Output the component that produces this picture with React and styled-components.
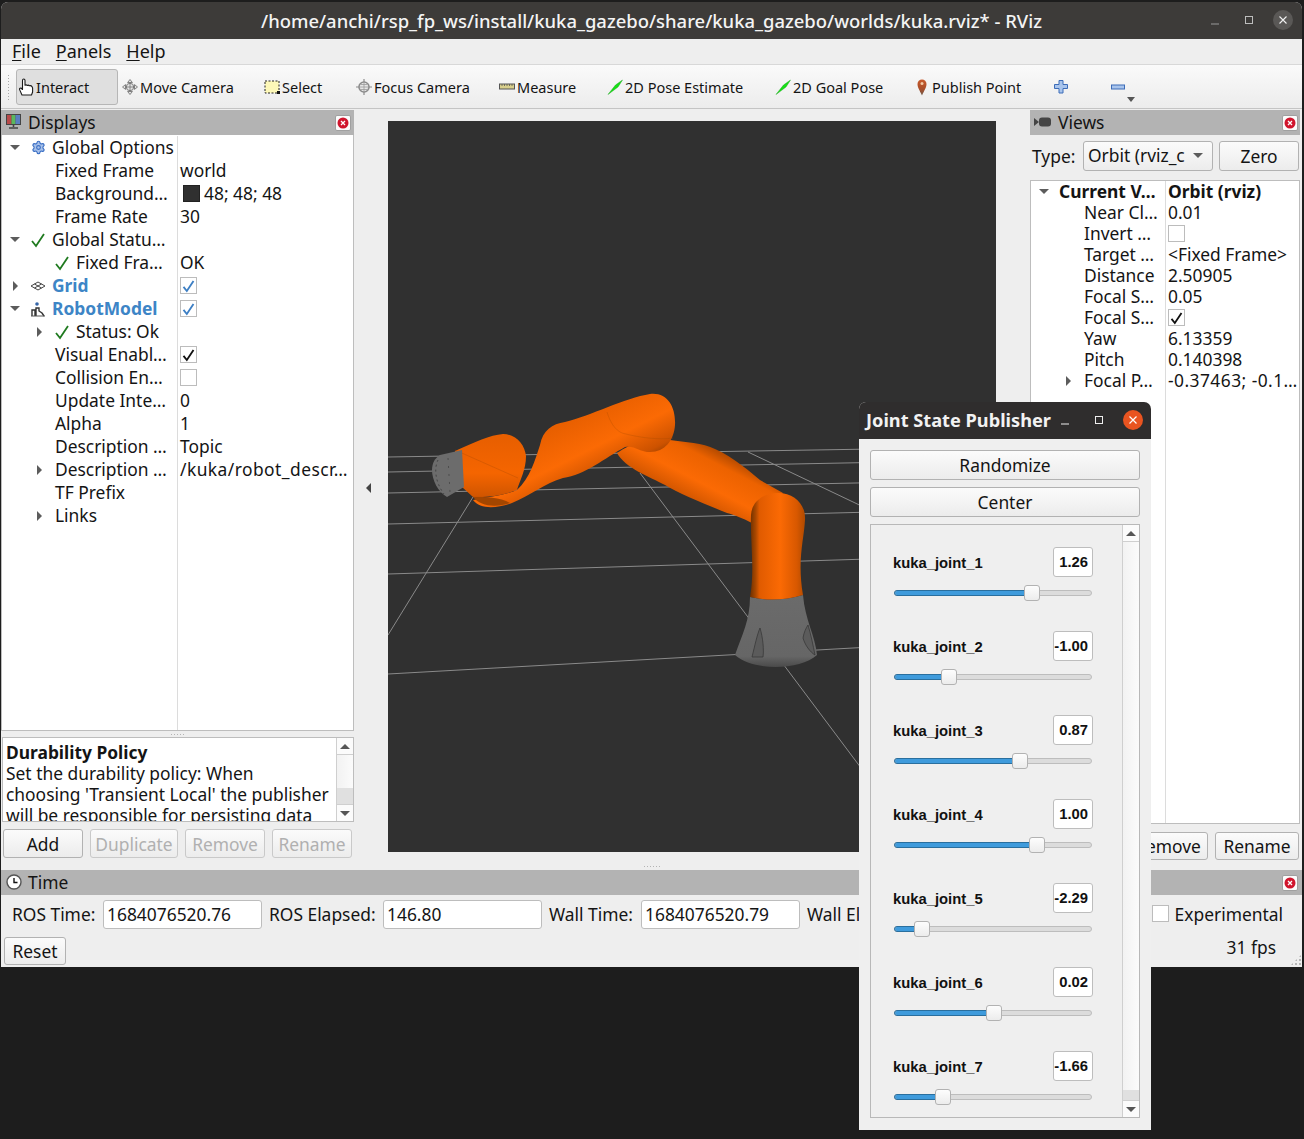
import React from 'react';
import styled, { createGlobalStyle } from 'styled-components';
import { Settings } from 'lucide-react';

const GlobalStyle = createGlobalStyle`
	html, body {
		margin: 0;
		background: #1d1d1d;
	}
	#root {
		width: 1304px;
		height: 1139px;
		overflow: hidden;
	}
	* {
		box-sizing: border-box;
	}
`;

const UI_FONT = `'Noto Sans', 'Open Sans', sans-serif`;

const Desktop = styled.div`
	position: relative;
	width: 1304px;
	height: 1139px;
	padding: 2px 2px 0 1px;
	font-family: ${UI_FONT};
	font-size: 17.4px;
	color: #141414;
`;

const Window = styled.div`
	display: flex;
	flex-direction: column;
	height: 965px;
	background: #eeeeee;
	border-radius: 7px 7px 0 0;
	overflow: hidden;
`;

const TitleBar = styled.div`
	display: grid;
	grid-template-columns: 1fr auto 1fr;
	align-items: center;
	height: 37px;
	padding-bottom: 1px;
	background: #3d3b39;
	color: #f4f4f4;
	font-size: 18.45px;
	font-weight: 500;
`;

const TitleText = styled.div`
	grid-column: 2;
	white-space: nowrap;
`;

const WindowControls = styled.div`
	grid-column: 3;
	justify-self: end;
	display: flex;
	align-items: center;
	gap: 14px;
	padding-right: 9px;
`;

const ControlSlot = styled.div`
	display: flex;
	align-items: center;
	justify-content: center;
	width: 20px;
	height: 20px;
	border-radius: 50%;
	background: ${({ $bg }) => $bg || 'transparent'};
`;

const MenuBar = styled.div`
	display: flex;
	align-items: center;
	gap: 15px;
	height: 26px;
	padding: 0 0 1px 11px;
	border-bottom: 1px solid #d8d8d8;
	font-size: 18px;
`;

const MenuItem = styled.span`
	u {
		text-underline-offset: 2px;
	}
`;

const ToolBar = styled.div`
	display: flex;
	align-items: center;
	height: 44px;
	padding-left: 6px;
	background: linear-gradient(#fafafa, #ececec);
	border-bottom: 1px solid #c4c4c4;
	font-size: 14.5px;
`;

const Grip = styled.div`
	width: 3px;
	height: 26px;
	margin-right: 6px;
	background-image: radial-gradient(#a8a8a8 0.8px, transparent 1px);
	background-size: 3px 3px;
`;

const Tool = styled.div`
	display: flex;
	align-items: center;
	gap: 2px;
	flex: none;
	width: ${({ $w }) => $w}px;
	height: 36px;
	margin-right: ${({ $gap }) => $gap || 0}px;
	padding-left: 3px;
	white-space: nowrap;
	border-radius: 3px;
	${({ $active }) =>
		$active &&
		`
		background: #dfdfdf;
		border: 1px solid #b6b6b6;
		padding-left: 1px;
	`}
`;

const OverflowArrow = styled.div`
	align-self: flex-end;
	margin: 0 0 6px -21px;
	width: 0;
	height: 0;
	border-left: 4px solid transparent;
	border-right: 4px solid transparent;
	border-top: 5px solid #555;
`;

const Main = styled.div`
	display: grid;
	grid-template-columns: 353px 676px 270px;
	height: 761px;
	padding-top: 1px;
`;

const Dock = styled.div`
	display: flex;
	flex-direction: column;
	min-width: 0;
`;

const DockHeader = styled.div`
	display: flex;
	align-items: center;
	flex: none;
	height: 25px;
	padding: 0 ${({ $right }) => $right || 2}px 2px 4px;
	background: #b3b3b3;
	font-size: 17.4px;
`;

const DockTitle = styled.span`
	flex: 1;
	margin-left: ${({ $gap }) => $gap}px;
`;

const CloseBox = styled.div`
	display: flex;
	align-items: center;
	justify-content: center;
	width: 16px;
	height: 16px;
	margin-top: 2px;
	background: #fbfbfb;
	border: 1px solid #a0a0a0;
	border-radius: 2px;
`;

const Tree = styled.div`
	display: flex;
	flex-direction: column;
	height: ${({ $h }) => $h}px;
	flex: none;
	padding-top: ${({ $flush }) => ($flush ? 1 : 0)}px;
	background: #ffffff;
	border: 1px solid #bdbdbd;
	border-top: ${({ $flush }) => ($flush ? 'none' : '1px solid #bdbdbd')};
	overflow: hidden;
`;

const TreeRow = styled.div`
	display: flex;
	flex: none;
	height: ${({ $h }) => $h}px;
	line-height: ${({ $h }) => $h}px;
	align-items: center;
	white-space: nowrap;
`;

const TreeFiller = styled.div`
	flex: 1;
	width: ${({ $split }) => $split}px;
	border-right: 1px solid #dcdcdc;
`;

const NameCell = styled.div`
	display: flex;
	align-items: center;
	flex: none;
	width: ${({ $split }) => $split}px;
	height: 100%;
	padding-left: ${({ $level }) => 1 + $level * 24}px;
	border-right: 1px solid #dcdcdc;
	font-weight: ${({ $bold }) => ($bold ? 700 : 400)};
	color: ${({ $blue }) => ($blue ? '#3d85c6' : 'inherit')};
`;

const Twisty = styled.div`
	display: flex;
	align-items: center;
	justify-content: center;
	flex: none;
	width: 24px;
`;

const TreeIcon = styled.div`
	display: flex;
	align-items: center;
	justify-content: center;
	flex: none;
	width: 18px;
	height: 18px;
	margin: 0 5px 0 2px;
`;

const NameText = styled.span`
	padding-left: ${({ $pad }) => $pad}px;
`;

const ValueCell = styled.div`
	display: flex;
	align-items: center;
	gap: 4px;
	flex: 1;
	min-width: 0;
	padding-left: 2px;
	font-weight: ${({ $bold }) => ($bold ? 700 : 400)};
	letter-spacing: ${({ $wide }) => ($wide ? '0.45px' : '0')};
`;

const ArrowRight = styled.div`
	width: 0;
	height: 0;
	border-top: 5px solid transparent;
	border-bottom: 5px solid transparent;
	border-left: 5px solid #5c5c5c;
`;

const ArrowDown = styled.div`
	width: 0;
	height: 0;
	border-left: 5.5px solid transparent;
	border-right: 5.5px solid transparent;
	border-top: 5px solid #5c5c5c;
`;

const Swatch = styled.div`
	width: 17px;
	height: 17px;
	margin-left: 3px;
	background: rgb(48, 48, 48);
	border: 1px solid #222;
`;

const CheckBox = styled.div`
	display: flex;
	align-items: center;
	justify-content: center;
	flex: none;
	width: 17px;
	height: 17px;
	background: #ffffff;
	border: 1px solid #bcbcbc;
`;

const Splitter = styled.div`
	flex: none;
	height: 6px;
	background-image: radial-gradient(#b4b4b4 0.7px, transparent 0.9px);
	background-size: 3px 3px;
	background-repeat: repeat-x;
	background-position: center 2px;
	background-clip: content-box;
	padding: 0 ${({ $side }) => $side}px;
`;

const PropsPanel = styled.div`
	display: flex;
	flex: none;
	height: 85px;
	margin-left: 1px;
	background: #ffffff;
	border: 1px solid #bdbdbd;
`;

const PropsText = styled.div`
	flex: 1;
	padding: 4px 0 0 3px;
	font-size: 17.4px;
	line-height: 21px;
	white-space: nowrap;
	overflow: hidden;
	b {
		display: block;
		font-weight: 700;
	}
`;

const ScrollBar = styled.div`
	display: flex;
	flex-direction: column;
	flex: none;
	width: 17px;
	border-left: 1px solid #cfcfcf;
`;

const ScrollStep = styled.div`
	display: flex;
	align-items: center;
	justify-content: center;
	flex: none;
	height: ${({ $h }) => $h}px;
	background: #fbfbfb;
	border-top: ${({ $top }) => ($top ? '1px solid #cfcfcf' : 'none')};
	border-bottom: ${({ $bottom }) => ($bottom ? '1px solid #cfcfcf' : 'none')};
`;

const ScrollThumb = styled.div`
	flex: 1;
	background: linear-gradient(90deg, #f2f2f2, #fbfbfb);
`;

const ScrollGroove = styled.div`
	flex: none;
	height: ${({ $h }) => $h}px;
	background: #e0e0e0;
`;

const ArrowUpSmall = styled.div`
	width: 0;
	height: 0;
	border-left: 5px solid transparent;
	border-right: 5px solid transparent;
	border-bottom: 5px solid #555;
`;

const ArrowDownSmall = styled.div`
	width: 0;
	height: 0;
	border-left: 5px solid transparent;
	border-right: 5px solid transparent;
	border-top: 5px solid #555;
`;

const ButtonRow = styled.div`
	display: flex;
	gap: ${({ $gap }) => $gap}px;
	justify-content: ${({ $end }) => ($end ? 'flex-end' : 'flex-start')};
	flex: none;
	margin: ${({ $m }) => $m};
`;

const PushButton = styled.div`
	display: flex;
	align-items: center;
	justify-content: center;
	flex: none;
	width: ${({ $w }) => ($w ? `${$w}px` : 'auto')};
	height: ${({ $h }) => $h || 29}px;
	padding-bottom: ${({ $pb }) => $pb || 0}px;
	background: linear-gradient(#fbfbfb, #ececec);
	border: 1px solid ${({ $disabled }) => ($disabled ? '#c9c9c9' : '#b2b2b2')};
	border-radius: 3px;
	color: ${({ $disabled }) => ($disabled ? '#b0b0b0' : 'inherit')};
	white-space: nowrap;
`;

const Center = styled.div`
	display: flex;
	align-items: flex-start;
	justify-content: center;
	position: relative;
	padding-top: 11px;
`;

const CollapseArrow = styled.div`
	position: absolute;
	left: 12px;
	top: 373px;
	width: 0;
	height: 0;
	border-top: 5px solid transparent;
	border-bottom: 5px solid transparent;
	border-right: 5px solid #444;
`;

const CenterDots = styled.div`
	position: absolute;
	left: 289px;
	bottom: 1px;
	width: 18px;
	height: 4px;
	background-image: radial-gradient(#b4b4b4 0.7px, transparent 0.9px);
	background-size: 3px 3px;
`;

const Viewport = styled.div`
	width: 608px;
	height: 731px;
	background: #303030;
	overflow: hidden;
	svg {
		display: block;
	}
`;

const TypeRow = styled.div`
	display: flex;
	align-items: center;
	flex: none;
	height: 30px;
	margin: 6px 0 9px;
	padding-left: 2px;
`;

const TypeLabel = styled.span`
	width: 51px;
`;

const ComboBox = styled.div`
	display: flex;
	align-items: center;
	justify-content: space-between;
	width: 130px;
	height: 30px;
	padding: 0 9px 2px 4px;
	margin-right: 6px;
	background: linear-gradient(#fbfbfb, #ececec);
	border: 1px solid #b2b2b2;
	border-radius: 3px;
`;

const ComboText = styled.span`
	white-space: nowrap;
`;

const TimePanel = styled.div`
	display: flex;
	flex-direction: column;
	flex: 1;
`;

const TimeHeader = styled(DockHeader)`
	padding-left: 5px;
`;

const TimeFields = styled.div`
	display: flex;
	align-items: center;
	flex: none;
	height: 29px;
	margin-top: 5px;
	padding-left: 11px;
`;

const TimeLabel = styled.span`
	flex: none;
	width: ${({ $w }) => $w}px;
	margin-bottom: 2px;
	white-space: nowrap;
`;

const TimeField = styled.div`
	display: flex;
	align-items: center;
	flex: none;
	width: 159px;
	height: 29px;
	margin-right: 7px;
	padding: 0 0 2px 3px;
	background: #ffffff;
	border: 1px solid #bdbdbd;
	border-radius: 3px;
`;

const Experimental = styled.div`
	display: flex;
	align-items: center;
	gap: 6px;
	margin: 0 0 2px auto;
	padding-right: 19px;
`;

const TimeFooter = styled.div`
	display: flex;
	align-items: center;
	justify-content: space-between;
	position: relative;
	flex: none;
	height: 28px;
	margin-top: 8px;
	padding: 0 26px 0 3px;
`;

const FpsText = styled.span`
	margin-bottom: 8px;
`;

const ResizeGrip = styled.div`
	position: absolute;
	right: 0;
	bottom: -1px;
	width: 12px;
	height: 12px;
	background-image: radial-gradient(#b4b4b4 0.7px, transparent 0.9px);
	background-size: 4px 4px;
	clip-path: polygon(100% 0, 100% 100%, 0 100%);
`;

const JointWindow = styled.div`
	position: absolute;
	left: 859px;
	top: 402px;
	display: flex;
	flex-direction: column;
	width: 292px;
	height: 728px;
	background: #efefef;
	border-radius: 7px 7px 0 0;
	overflow: hidden;
`;

const JointTitleBar = styled.div`
	display: flex;
	align-items: center;
	flex: none;
	height: 37px;
	padding: 0 8px 2px 7px;
	background: #2f2d2d;
	color: #f2f2f2;
	font-size: 18.2px;
	font-weight: 700;
`;

const JointTitle = styled.span`
	flex: 1;
	white-space: nowrap;
`;

const JointControls = styled.div`
	display: flex;
	align-items: center;
	gap: 14px;
`;

const JointBody = styled.div`
	display: flex;
	flex-direction: column;
	gap: 7px;
	padding: 11px 11px 12px;
	flex: 1;
	min-height: 0;
`;

const ScrollArea = styled.div`
	display: flex;
	flex: 1;
	min-height: 0;
	border: 1px solid #b8b8b8;
`;

const JointList = styled.div`
	flex: 1;
	padding: 22px 29px 0 22px;
	overflow: hidden;
`;

const JointBlock = styled.div`
	height: 84px;
`;

const JointHead = styled.div`
	display: flex;
	align-items: center;
	justify-content: space-between;
	height: 30px;
	font-family: 'Liberation Sans', Arial, sans-serif;
	font-size: 14.8px;
	font-weight: 700;
	color: #111;
`;

const JointName = styled.span`
	padding-top: 2px;
`;

const JointValue = styled.div`
	display: flex;
	align-items: center;
	justify-content: flex-end;
	width: 40px;
	height: 30px;
	padding-right: 4px;
	background: #ffffff;
	border: 1px solid #bdbdbd;
	border-radius: 3px;
`;

const SliderTrack = styled.div`
	position: relative;
	width: 198px;
	height: 6px;
	margin: 13px 0 0 1px;
	background: #dcdcdc;
	border: 1px solid #bdbdbd;
	border-radius: 3px;
`;

const SliderFill = styled.div`
	height: 100%;
	background: #3f9bdc;
	outline: 1px solid #2a6f9e;
	border-radius: 3px 0 0 3px;
`;

const SliderHandle = styled.div`
	position: absolute;
	top: -6px;
	width: 16px;
	height: 16px;
	margin-left: -8px;
	background: linear-gradient(#fdfdfd, #ececec);
	border: 1px solid #b2b2b2;
	border-radius: 3px;
`;

const CloseIcon = () => (
	<svg width="12" height="12" viewBox="0 0 12 12">
		<circle cx="6" cy="6" r="5.5" fill="#d0142c" />
		<path d="M4 4l4 4M8 4l-4 4" stroke="#fff" strokeWidth="1.3" />
	</svg>
);

const Check = ({ color = '#1f7a1f', size = 18, weight = 1.8 }) => (
	<svg width={size} height={size} viewBox="0 0 18 18">
		<path d="M3 10l4 5 8-12" fill="none" stroke={color} strokeWidth={weight} />
	</svg>
);

const MonitorIcon = () => (
	<svg width="17" height="17" viewBox="0 0 17 17">
		<rect x="1" y="1" width="15" height="11" fill="#444" />
		<rect x="2" y="2" width="4.5" height="9" fill="#b84a4a" />
		<rect x="6.5" y="2" width="4" height="9" fill="#5cb85c" />
		<rect x="10.5" y="2" width="4.5" height="9" fill="#5a7fc0" />
		<path d="M8.5 12v2M4 15h9" stroke="#444" strokeWidth="1.6" />
	</svg>
);

const CameraIcon = () => (
	<svg width="18" height="12" viewBox="0 0 18 12">
		<path d="M0 2l5 4-5 4z" fill="#444" />
		<rect x="5" y="1.5" width="12" height="9" rx="3" fill="#444" />
	</svg>
);

const ClockIcon = () => (
	<svg width="16" height="16" viewBox="0 0 16 16">
		<circle cx="8" cy="8" r="7" fill="#fff" stroke="#555" strokeWidth="1.4" />
		<path d="M8 4v4.5h3.5" fill="none" stroke="#111" strokeWidth="1.4" />
	</svg>
);

const GridIcon = () => (
	<svg width="16" height="12" viewBox="0 0 16 12">
		<path d="M1 6l7-4 7 4-7 4z M4.5 4l7 4 M11.5 4l-7 4" fill="none" stroke="#444" strokeWidth="1" />
	</svg>
);

const RobotIcon = () => (
	<svg width="16" height="16" viewBox="0 0 16 16">
		<circle cx="7" cy="3" r="1.8" fill="#3565a8" />
		<path d="M2 15V9h3v6M6 15V7h3v3l3 2 2 3" fill="none" stroke="#333" strokeWidth="1.4" />
		<path d="M1 15h14" stroke="#555" strokeWidth="1" />
	</svg>
);

const HandIcon = () => (
	<svg width="16" height="18" viewBox="0 0 16 18" style={{ flex: 'none' }}>
		<path
			d="M4 17L1.6 11.6Q1.2 9.8 3 10L4.5 11.5V2.5Q4.5 1 5.7 1Q7 1 7 2.5V7.3Q8.2 6.3 9.2 7.5Q10.4 6.6 11.4 7.8Q13 7.2 14 8.6L14.6 10V14L13.5 17Z"
			fill="#fff"
			stroke="#1a1a1a"
			strokeWidth="1.1"
			strokeLinejoin="round"
		/>
	</svg>
);

const MoveIcon = () => (
	<svg width="16" height="16" viewBox="0 0 16 16" style={{ flex: 'none' }}>
		<path d="M8 0.5L5.6 3.5H10.4ZM8 15.5L5.6 12.5H10.4ZM0.5 8L3.5 5.6V10.4ZM15.5 8L12.5 5.6V10.4Z" fill="#e4e4e4" stroke="#6a6a6a" strokeWidth="0.8" />
		<circle cx="8" cy="8" r="3.7" fill="#e8e8e8" stroke="#7a7a7a" />
		<path d="M8 3.5V12.5M3.5 8H12.5" stroke="#7a7a7a" strokeWidth="0.9" />
	</svg>
);

const SelectIcon = () => (
	<svg width="16" height="16" viewBox="0 0 16 16" style={{ flex: 'none' }}>
		<rect x="1" y="2" width="14" height="12" fill="#fdf8b8" stroke="#222" strokeDasharray="2 1.5" />
		<rect x="13" y="12" width="3" height="3" fill="#111" />
	</svg>
);

const FocusIcon = () => (
	<svg width="16" height="16" viewBox="0 0 16 16" style={{ flex: 'none' }}>
		<path d="M8 0V16M0 8H16" stroke="#8c8c8c" strokeWidth="1.2" />
		<circle cx="8" cy="8" r="5" fill="#e6e6e6" stroke="#8c8c8c" strokeWidth="1.6" />
		<path d="M8 3V13M3 8H13M5 5.5H11M5 10.5H11" stroke="#9a9a9a" strokeWidth="0.8" />
	</svg>
);

const RulerIcon = () => (
	<svg width="16" height="16" viewBox="0 0 16 16" style={{ flex: 'none' }}>
		<rect x="0.5" y="5" width="15" height="5" fill="#d8cf8c" stroke="#555" />
		<path d="M3 5v2M5.5 5v2M8 5v2M10.5 5v2M13 5v2" stroke="#555" strokeWidth="0.8" />
	</svg>
);

const PoseIcon = () => (
	<svg width="16" height="16" viewBox="0 0 16 16" style={{ flex: 'none' }}>
		<path d="M1 15.5L8.5 6L15.5 1L11 8Z" fill="#16e016" stroke="#0c9c0c" strokeWidth="0.4" />
	</svg>
);

const PinIcon = () => (
	<svg width="16" height="18" viewBox="0 0 16 18" style={{ flex: 'none' }}>
		<defs>
			<linearGradient id="pinFill" x1="0" y1="0" x2="0" y2="1">
				<stop offset="0" stopColor="#c85a2c" />
				<stop offset="0.6" stopColor="#a94e2a" />
				<stop offset="1" stopColor="#6b5a4c" />
			</linearGradient>
		</defs>
		<path d="M8 17.5C5.5 12 3.5 9.5 3.5 6a4.5 4.5 0 0 1 9 0c0 3.5-2 6-4.5 11.5z" fill="url(#pinFill)" />
		<circle cx="8" cy="5.5" r="1.5" fill="#f3c9a4" />
	</svg>
);

const PlusIcon = () => (
	<svg width="16" height="16" viewBox="0 0 16 16" style={{ flex: 'none' }}>
		<path d="M5 1.5h4v4h4.5v4H9v4.5H5V9.5H0.5v-4H5z" fill="#a8c4ec" stroke="#3d6cb8" />
	</svg>
);

const MinusIcon = () => (
	<svg width="16" height="16" viewBox="0 0 16 16" style={{ flex: 'none' }}>
		<rect x="0.5" y="6" width="13" height="4" fill="#a8c4ec" stroke="#3d6cb8" />
	</svg>
);

const TOOLS = [
	{ label: 'Interact', w: 102, gap: 1, active: true, icon: <HandIcon /> },
	{ label: 'Move Camera', w: 142, icon: <MoveIcon /> },
	{ label: 'Select', w: 92, icon: <SelectIcon /> },
	{ label: 'Focus Camera', w: 143, icon: <FocusIcon /> },
	{ label: 'Measure', w: 108, icon: <RulerIcon /> },
	{ label: '2D Pose Estimate', w: 168, icon: <PoseIcon /> },
	{ label: '2D Goal Pose', w: 139, icon: <PoseIcon /> },
	{ label: 'Publish Point', w: 140, icon: <PinIcon /> },
	{ label: '', w: 57, icon: <PlusIcon /> },
	{ label: '', w: 40, icon: <MinusIcon /> },
];

const DISPLAY_ROWS = [
	{ level: 0, open: true, icon: <Settings size={15} color="#3b6fc4" fill="#a9c2ea" strokeWidth={1.8} />, name: 'Global Options' },
	{ level: 1, name: 'Fixed Frame', value: 'world' },
	{ level: 1, name: 'Background…', value: '48; 48; 48', swatch: true },
	{ level: 1, name: 'Frame Rate', value: '30' },
	{ level: 0, open: true, icon: <Check />, name: 'Global Statu…' },
	{ level: 1, icon: <Check />, name: 'Fixed Fra…', value: 'OK' },
	{ level: 0, closed: true, icon: <GridIcon />, name: 'Grid', blue: true, bold: true, check: '#3d7fc4' },
	{ level: 0, open: true, icon: <RobotIcon />, name: 'RobotModel', blue: true, bold: true, check: '#3d7fc4' },
	{ level: 1, closed: true, icon: <Check />, name: 'Status: Ok' },
	{ level: 1, name: 'Visual Enabl…', check: '#111' },
	{ level: 1, name: 'Collision En…', check: 'none' },
	{ level: 1, name: 'Update Inte…', value: '0' },
	{ level: 1, name: 'Alpha', value: '1' },
	{ level: 1, name: 'Description …', value: 'Topic' },
	{ level: 1, closed: true, name: 'Description …', value: '/kuka/robot_descr…', wide: true },
	{ level: 1, name: 'TF Prefix' },
	{ level: 1, closed: true, name: 'Links' },
];

const VIEW_ROWS = [
	{ level: 0, open: true, name: 'Current V…', value: 'Orbit (rviz)', bold: true, pad: 3 },
	{ level: 1, name: 'Near Cl…', value: '0.01' },
	{ level: 1, name: 'Invert …', check: 'none' },
	{ level: 1, name: 'Target …', value: '<Fixed Frame>' },
	{ level: 1, name: 'Distance', value: '2.50905' },
	{ level: 1, name: 'Focal S…', value: '0.05' },
	{ level: 1, name: 'Focal S…', check: '#111' },
	{ level: 1, name: 'Yaw', value: '6.13359' },
	{ level: 1, name: 'Pitch', value: '0.140398' },
	{ level: 1, closed: true, name: 'Focal P…', value: '-0.37463; -0.1…', wide: true },
];

const JOINTS = [
	{ name: 'kuka_joint_1', value: 1.26, limit: 2.97 },
	{ name: 'kuka_joint_2', value: -1.0, limit: 2.09 },
	{ name: 'kuka_joint_3', value: 0.87, limit: 2.97 },
	{ name: 'kuka_joint_4', value: 1.0, limit: 2.09 },
	{ name: 'kuka_joint_5', value: -2.29, limit: 2.97 },
	{ name: 'kuka_joint_6', value: 0.02, limit: 2.09 },
	{ name: 'kuka_joint_7', value: -1.66, limit: 3.05 },
];

const PropertyRow = ({ row, split, height }) => (
	<TreeRow $h={height}>
		<NameCell $split={split} $level={row.level} $bold={row.bold} $blue={row.blue}>
			<Twisty>
				{row.open && <ArrowDown />}
				{row.closed && <ArrowRight />}
			</Twisty>
			{row.icon && <TreeIcon>{row.icon}</TreeIcon>}
			<NameText $pad={row.pad ?? (row.icon ? 0 : 4)}>{row.name}</NameText>
		</NameCell>
		<ValueCell $bold={row.bold} $wide={row.wide}>
			{row.swatch && <Swatch />}
			{row.value}
			{row.check && (
				<CheckBox>
					{row.check !== 'none' && <Check color={row.check} size={16} weight={2.2} />}
				</CheckBox>
			)}
		</ValueCell>
	</TreeRow>
);

const Scroller = ({ groove }) => (
	<ScrollBar>
		<ScrollStep $h={17} $bottom>
			<ArrowUpSmall />
		</ScrollStep>
		<ScrollThumb />
		<ScrollGroove $h={groove} />
		<ScrollStep $h={17} $top>
			<ArrowDownSmall />
		</ScrollStep>
	</ScrollBar>
);

const RobotScene = () => (
	<svg width="608" height="731" viewBox="388 121 608 731">
		<defs>
			<linearGradient id="link1" x1="0" y1="0" x2="1" y2="0">
				<stop offset="0" stopColor="#6d3000" />
				<stop offset="0.1" stopColor="#a84700" />
				<stop offset="0.17" stopColor="#e05b00" />
				<stop offset="0.55" stopColor="#fb6a04" />
				<stop offset="0.85" stopColor="#d85800" />
				<stop offset="1" stopColor="#b04a00" />
			</linearGradient>
			<linearGradient id="link2" x1="710" y1="447" x2="680" y2="505" gradientUnits="userSpaceOnUse">
				<stop offset="0" stopColor="#b84c00" />
				<stop offset="0.18" stopColor="#ec6200" />
				<stop offset="0.55" stopColor="#fb6a04" />
				<stop offset="0.85" stopColor="#d25600" />
				<stop offset="1" stopColor="#964000" />
			</linearGradient>
			<linearGradient id="link3" x1="590" y1="410" x2="625" y2="480" gradientUnits="userSpaceOnUse">
				<stop offset="0" stopColor="#e85f00" />
				<stop offset="0.45" stopColor="#fb6a04" />
				<stop offset="0.8" stopColor="#cc5200" />
				<stop offset="1" stopColor="#7a3400" />
			</linearGradient>
			<linearGradient id="wrist" x1="490" y1="438" x2="490" y2="508" gradientUnits="userSpaceOnUse">
				<stop offset="0" stopColor="#e85f00" />
				<stop offset="0.5" stopColor="#f56500" />
				<stop offset="0.82" stopColor="#d25600" />
				<stop offset="1" stopColor="#8d3c00" />
			</linearGradient>
			<linearGradient id="base" x1="0" y1="0" x2="0" y2="1">
				<stop offset="0" stopColor="#6b6b6b" />
				<stop offset="0.85" stopColor="#666" />
				<stop offset="1" stopColor="#4a4a4a" />
			</linearGradient>
		</defs>
		<g stroke="#8a8a8a" strokeWidth="1" fill="none">
			<path d="M388 457L996 447" />
			<path d="M388 472L996 460" />
			<path d="M388 493L996 480" />
			<path d="M388 524L996 509" />
			<path d="M388 574L996 555" />
			<path d="M388 674L996 640" />
			<path d="M473 497L388 635" />
			<path d="M640 473L900 820" />
			<path d="M748 452L996 570" />
		</g>
		<path
			d="M617 453C640 438 655 436 670 440C685 442 703 443 715 449C735 458 750 472 760 480L783 493L752 523C742 518 735 515 727 513C700 502 680 494 665 485C650 477 625 468 617 453Z"
			fill="url(#link2)"
		/>
		<path
			d="M540 445C543 430 552 424 565 422C590 416 625 398 650 394C668 392 676 408 675 425C674 440 665 452 650 452C640 452 634 445 625 447C605 458 585 475 563 478C545 483 530 496 512 503C495 509 480 509 473 500C490 497 505 495 517 490C530 478 535 460 540 445Z"
			fill="url(#link3)"
		/>
		<path d="M607 412C610 422 615 430 622 433C640 438 660 440 673 438" fill="none" stroke="#a84a00" strokeWidth="0.6" strokeOpacity="0.5" />
		<path
			d="M455 451C475 442 490 435 503 434C516 434 525 445 526 456C526 470 520 480 517 490C505 495 487 498 473 497L462 487Z"
			fill="url(#wrist)"
		/>
		<path d="M455 450L518 478" stroke="#a84a00" strokeWidth="0.6" strokeOpacity="0.55" />
		<path d="M473 497C480 506 495 508 510 503C500 497 485 497 473 497Z" fill="#a34600" />
		<path d="M440 455L462 450L464 487L447 497C438 492 432 480 432 470C432 463 435 458 440 455Z" fill="#6c6c6c" />
		<path d="M438 460C434 468 435 482 444 494" fill="none" stroke="#444" strokeWidth="1" strokeDasharray="2 3" />
		<path d="M448 458L450 492" stroke="#444" strokeWidth="0.8" strokeDasharray="2 6" />
		<path
			d="M750 597Q776 603 803 595C805 620 815 635 817 655C800 670 755 672 735 655C742 635 750 620 750 597Z"
			fill="url(#base)"
		/>
		<path d="M752 657C755 645 757 635 760 628C763 638 764 650 763 657ZM803 638C804 632 806 628 808 625C811 635 813 645 815 655C810 652 805 645 803 638Z" fill="#5b5b5b" stroke="#333" strokeWidth="0.7" />
		<path
			d="M750 597C755 570 750 540 751 515C752 500 765 493 778 493C795 493 806 505 805 520C804 540 797 560 803 595Q776 603 750 597Z"
			fill="url(#link1)"
		/>
	</svg>
);

const App = () => (
	<Desktop>
		<GlobalStyle />
		<Window>
			<TitleBar>
				<TitleText>/home/anchi/rsp_fp_ws/install/kuka_gazebo/share/kuka_gazebo/worlds/kuka.rviz* - RViz</TitleText>
				<WindowControls>
					<ControlSlot>
						<svg width="10" height="10" viewBox="0 0 10 10">
							<path d="M1 9h8" stroke="#9a9a9a" />
						</svg>
					</ControlSlot>
					<ControlSlot>
						<svg width="10" height="10" viewBox="0 0 10 10">
							<rect x="1.5" y="1.5" width="7" height="7" fill="none" stroke="#bdbdbd" />
						</svg>
					</ControlSlot>
					<ControlSlot $bg="#5a5856">
						<svg width="10" height="10" viewBox="0 0 10 10">
							<path d="M1.5 1.5l7 7M8.5 1.5l-7 7" stroke="#f0f0f0" strokeWidth="1.1" />
						</svg>
					</ControlSlot>
				</WindowControls>
			</TitleBar>
			<MenuBar>
				<MenuItem><u>F</u>ile</MenuItem>
				<MenuItem><u>P</u>anels</MenuItem>
				<MenuItem><u>H</u>elp</MenuItem>
			</MenuBar>
			<ToolBar>
				<Grip />
				{TOOLS.map(({ label, w, gap, active, icon }, i) => (
					<Tool key={i} $w={w} $active={active} $gap={gap}>
						{icon}
						{label}
					</Tool>
				))}
				<OverflowArrow />
			</ToolBar>
			<Main>
				<Dock>
					<DockHeader $right={3}>
						<MonitorIcon />
						<DockTitle $gap={6}>Displays</DockTitle>
						<CloseBox>
							<CloseIcon />
						</CloseBox>
					</DockHeader>
					<Tree $h={596} $flush>
						{DISPLAY_ROWS.map((row, i) => (
							<PropertyRow key={i} row={row} split={176} height={23} />
						))}
						<TreeFiller $split={176} />
					</Tree>
					<Splitter $side={168} />
					<PropsPanel>
						<PropsText>
							<b>Durability Policy</b>
							Set the durability policy: When<br />
							choosing 'Transient Local' the publisher<br />
							will be responsible for persisting data
						</PropsText>
						<Scroller groove={16} />
					</PropsPanel>
					<ButtonRow $gap={7} $m="7px 0 0 2px">
						<PushButton $w={80}>Add</PushButton>
						<PushButton $w={88} $disabled>Duplicate</PushButton>
						<PushButton $w={80} $disabled>Remove</PushButton>
						<PushButton $w={80} $disabled>Rename</PushButton>
					</ButtonRow>
				</Dock>
				<Center>
					<CollapseArrow />
					<Viewport>
						<RobotScene />
					</Viewport>
					<CenterDots />
				</Center>
				<Dock>
					<DockHeader>
						<CameraIcon />
						<DockTitle $gap={6}>Views</DockTitle>
						<CloseBox>
							<CloseIcon />
						</CloseBox>
					</DockHeader>
					<TypeRow>
						<TypeLabel>Type:</TypeLabel>
						<ComboBox>
							<ComboText>Orbit (rviz_c</ComboText>
							<ArrowDown />
						</ComboBox>
						<PushButton $w={80} $h={30}>Zero</PushButton>
					</TypeRow>
					<Tree $h={644}>
						{VIEW_ROWS.map((row) => (
							<PropertyRow key={row.name + row.value + row.check} row={row} split={135} height={21} />
						))}
						<TreeFiller $split={135} />
					</Tree>
					<ButtonRow $gap={7} $end $m="8px 1px 0 0">
						<PushButton $w={80} $h={28}>Remove</PushButton>
						<PushButton $w={84} $h={28}>Rename</PushButton>
					</ButtonRow>
				</Dock>
			</Main>
			<TimePanel>
				<TimeHeader $right={4}>
					<ClockIcon />
					<DockTitle $gap={6}>Time</DockTitle>
					<CloseBox>
						<CloseIcon />
					</CloseBox>
				</TimeHeader>
				<TimeFields>
					<TimeLabel $w={91}>ROS Time:</TimeLabel>
					<TimeField>1684076520.76</TimeField>
					<TimeLabel $w={114}>ROS Elapsed:</TimeLabel>
					<TimeField>146.80</TimeField>
					<TimeLabel $w={92}>Wall Time:</TimeLabel>
					<TimeField>1684076520.79</TimeField>
					<TimeLabel $w={114}>Wall Elapsed:</TimeLabel>
					<Experimental>
						<CheckBox />
						Experimental
					</Experimental>
				</TimeFields>
				<TimeFooter>
					<PushButton $w={62} $h={28} $pb={1}>Reset</PushButton>
					<FpsText>31 fps</FpsText>
					<ResizeGrip />
				</TimeFooter>
			</TimePanel>
		</Window>
		<JointWindow>
			<JointTitleBar>
				<JointTitle>Joint State Publisher</JointTitle>
				<JointControls>
					<ControlSlot>
						<svg width="10" height="10" viewBox="0 0 10 10">
							<path d="M1 9h8" stroke="#eee" />
						</svg>
					</ControlSlot>
					<ControlSlot>
						<svg width="10" height="10" viewBox="0 0 10 10">
							<rect x="1.5" y="1.5" width="7" height="7" fill="none" stroke="#eee" />
						</svg>
					</ControlSlot>
					<ControlSlot $bg="#e95420">
						<svg width="10" height="10" viewBox="0 0 10 10">
							<path d="M1.5 1.5l7 7M8.5 1.5l-7 7" stroke="#fff" strokeWidth="1.2" />
						</svg>
					</ControlSlot>
				</JointControls>
			</JointTitleBar>
			<JointBody>
				<PushButton $h={30} $pb={1}>Randomize</PushButton>
				<PushButton $h={30} $pb={1}>Center</PushButton>
				<ScrollArea>
					<JointList>
						{JOINTS.map(({ name, value, limit }) => {
							const pos = 6.5 + (183 * (value + limit)) / (2 * limit);
							return (
								<JointBlock key={name}>
									<JointHead>
										<JointName>{name}</JointName>
										<JointValue>{value.toFixed(2)}</JointValue>
									</JointHead>
									<SliderTrack>
										<SliderFill style={{ width: pos }} />
										<SliderHandle style={{ left: pos }} />
									</SliderTrack>
								</JointBlock>
							);
						})}
					</JointList>
					<Scroller groove={10} />
				</ScrollArea>
			</JointBody>
		</JointWindow>
	</Desktop>
);

export default App;
